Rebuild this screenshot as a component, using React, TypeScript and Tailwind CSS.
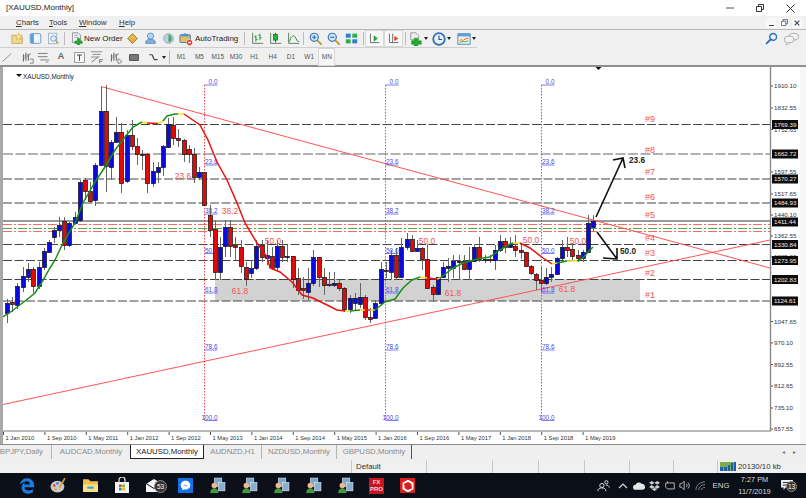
import { FaEdgeLegacy } from "react-icons/fa";

type Candle = [number, number, number, number, number, "b" | "r"];

const candles: Candle[] = [
  [7, 303, 313, 299, 323, "b"], [12, 302, 304, 297, 312, "r"], [17, 286, 305, 283, 309, "b"], [23, 276, 287, 267, 292, "b"],
  [28, 269, 277, 263, 282, "b"], [33, 269, 286, 267, 293, "r"], [39, 267, 286, 262, 289, "b"], [44, 251, 267, 248, 270, "b"],
  [49, 242, 252, 240, 253, "b"], [54, 230, 237, 227, 243, "b"], [59, 225, 230, 217, 237, "b"], [64, 221, 245, 217, 250, "r"],
  [69, 223, 245, 222, 247, "b"], [75, 217, 223, 212, 224, "b"], [80, 182, 220, 180, 222, "b"], [85, 180, 191, 178, 200, "r"],
  [90, 191, 201, 182, 203, "r"], [95, 165, 200, 163, 206, "b"], [101, 111, 165, 87, 165, "b"], [106, 111, 166, 85, 192, "r"],
  [111, 142, 167, 140, 180, "b"], [116, 132, 142, 117, 143, "b"], [121, 132, 183, 123, 193, "r"], [127, 135, 181, 130, 183, "b"],
  [132, 135, 146, 120, 150, "r"], [137, 146, 154, 138, 165, "r"], [142, 154, 155, 150, 170, "r"], [147, 154, 183, 153, 193, "r"],
  [153, 171, 183, 162, 187, "b"], [158, 167, 172, 162, 183, "b"], [163, 146, 167, 145, 176, "b"], [168, 124, 147, 118, 148, "b"],
  [173, 125, 138, 117, 145, "r"], [178, 138, 140, 129, 147, "r"], [184, 140, 154, 139, 162, "r"], [189, 149, 154, 145, 163, "r"],
  [194, 154, 177, 148, 183, "r"], [199, 172, 177, 167, 180, "b"], [204, 172, 205, 172, 206, "r"], [210, 215, 230, 205, 237, "r"],
  [215, 229, 272, 220, 280, "r"], [220, 247, 272, 237, 280, "b"], [225, 227, 246, 220, 257, "b"], [230, 227, 246, 220, 257, "r"],
  [235, 245, 247, 237, 260, "r"], [241, 247, 266, 240, 273, "r"], [246, 267, 279, 262, 286, "r"], [251, 268, 273, 260, 278, "b"],
  [256, 246, 268, 240, 270, "b"], [262, 245, 257, 240, 262, "r"], [267, 255, 258, 240, 265, "b"], [272, 256, 268, 247, 270, "r"],
  [277, 246, 267, 240, 270, "b"], [282, 246, 257, 240, 262, "r"], [287, 256, 257, 245, 262, "b"], [293, 256, 279, 256, 288, "r"],
  [298, 278, 290, 268, 295, "r"], [303, 288, 290, 277, 299, "r"], [308, 283, 292, 268, 300, "b"], [313, 257, 283, 250, 286, "b"],
  [319, 257, 277, 257, 287, "r"], [324, 277, 285, 268, 295, "r"], [329, 284, 285, 272, 287, "b"], [334, 283, 285, 272, 287, "b"],
  [339, 283, 288, 280, 291, "r"], [344, 288, 309, 287, 312, "r"], [350, 298, 309, 295, 313, "b"], [355, 298, 303, 293, 310, "b"],
  [360, 297, 304, 283, 308, "b"], [365, 297, 317, 295, 320, "r"], [370, 317, 319, 308, 323, "r"], [375, 303, 318, 300, 318, "b"],
  [381, 269, 303, 262, 305, "b"], [386, 270, 271, 262, 278, "r"], [391, 255, 272, 250, 279, "b"], [396, 255, 277, 248, 280, "r"],
  [401, 247, 277, 238, 278, "b"], [407, 239, 247, 233, 250, "b"], [412, 239, 251, 235, 252, "r"], [417, 248, 251, 240, 252, "b"],
  [422, 248, 259, 247, 270, "r"], [427, 259, 288, 244, 289, "r"], [433, 287, 294, 285, 302, "r"], [438, 277, 294, 277, 295, "b"],
  [443, 267, 277, 262, 278, "b"], [448, 266, 268, 258, 282, "b"], [453, 261, 268, 255, 278, "b"], [459, 261, 262, 255, 280, "b"],
  [464, 261, 269, 255, 270, "r"], [469, 261, 269, 247, 280, "b"], [474, 247, 261, 245, 262, "b"], [479, 247, 259, 237, 262, "r"],
  [485, 259, 260, 255, 263, "b"], [490, 259, 260, 255, 263, "r"], [495, 250, 260, 245, 270, "b"], [500, 241, 250, 235, 252, "b"],
  [505, 241, 247, 238, 253, "r"], [510, 244, 247, 237, 248, "b"], [515, 246, 250, 235, 257, "r"], [521, 250, 252, 243, 259, "r"],
  [526, 252, 266, 252, 267, "r"], [531, 266, 273, 265, 275, "r"], [536, 274, 280, 273, 290, "r"], [541, 280, 283, 267, 292, "r"],
  [546, 277, 283, 268, 285, "b"], [551, 274, 277, 267, 282, "b"], [557, 258, 274, 257, 275, "b"], [562, 247, 258, 240, 260, "b"],
  [567, 247, 250, 237, 257, "r"], [572, 249, 256, 243, 260, "r"], [578, 255, 258, 250, 262, "r"], [583, 252, 258, 250, 262, "b"],
  [588, 223, 252, 215, 253, "b"], [593, 221, 227, 215, 232, "b"],
];

const maSegments: { color: string; points: string }[] = [
  { color: "#1a8f1a", points: "3,317 12,311 25,301 35,293 42,282 50,268 55,260 63,243 75,223 83,203 95,182 105,167 115,150 125,137 133,127 142,122" },
  { color: "#f0e020", points: "142,122 147,123" },
  { color: "#e81010", points: "147,123 158,123.5" },
  { color: "#f0e020", points: "158,123.5 163,121" },
  { color: "#1a8f1a", points: "163,121 167,116 175,114 178,114" },
  { color: "#f0e020", points: "178,114 184,114" },
  { color: "#e81010", points: "184,114 200,125 208,140 217,162 227,180 237,203 245,223 257,243 267,257 270,268 280,272 292,282 302,295 313,298 323,303 337,310 345,311" },
  { color: "#f0e020", points: "345,311 350,311" },
  { color: "#1a8f1a", points: "350,311 360,310" },
  { color: "#f0e020", points: "360,310 365,310" },
  { color: "#e81010", points: "365,310 370,310" },
  { color: "#f0e020", points: "370,310 375,310" },
  { color: "#1a8f1a", points: "375,310 385,302 395,299 403,288 412,280 420,277" },
  { color: "#f0e020", points: "420,277 427,278" },
  { color: "#e81010", points: "427,278 437,279" },
  { color: "#f0e020", points: "437,279 440,278" },
  { color: "#1a8f1a", points: "440,278 453,268 463,263 477,259 490,257 500,250 510,244 513,243" },
  { color: "#f0e020", points: "513,243 520,243" },
  { color: "#e81010", points: "520,243 530,248 543,258 552,264" },
  { color: "#f0e020", points: "552,264 557,263" },
  { color: "#1a8f1a", points: "557,263 567,261" },
  { color: "#f0e020", points: "567,261 577,260.7" },
  { color: "#1a8f1a", points: "577,260.7 583,258 588,252 593,247" },
];

const priceLabels: [string, number][] = [
  ["1910.10", 86], ["1832.55", 108], ["1752.65", 129.5], ["1597.55", 172], ["1517.65", 194], ["1440.10", 215],
  ["1362.55", 236], ["1285.00", 257], ["1047.65", 321.5], ["970.10", 343], ["892.55", 364.5], ["812.65", 386], ["735.10", 408], ["657.55", 429],
];
const priceTags: [string, number][] = [
  ["1769.39", 124.5], ["1662.72", 154], ["1570.27", 179], ["1484.93", 203], ["1411.44", 222],
  ["1330.84", 244.5], ["1273.95", 260.5], ["1202.83", 279.5], ["1124.61", 301],
];
const levels = [124.5, 179, 203, 244.5, 260.5, 279.5, 301];
const fibLevels: [string, number][] = [["0.0", 85], ["23.6", 165], ["38.2", 214], ["50.0", 253.5], ["61.8", 293], ["78.6", 350], ["100.0", 420.5]];
const fibColumns = [204.5, 385.5, 541.5];
const fiboText: [string, number, number][] = [
  ["23.6", 183, 179], ["38.2", 230, 214], ["50.0", 273, 244], ["61.8", 240, 294], ["50.0", 427, 244],
  ["61.8", 453, 296], ["50.0", 531, 243], ["50.0", 578, 244], ["61.8", 567, 292],
];
const hashLabels: [string, number][] = [["#9", 122], ["#8", 153], ["#7", 175], ["#6", 200], ["#5", 218], ["#4", 241], ["#3", 256], ["#2", 276], ["#1", 298]];
const dates = ["1 Jan 2010", "1 Sep 2010", "1 May 2011", "1 Jan 2012", "1 Sep 2012", "1 May 2013", "1 Jan 2014", "1 Sep 2014", "1 May 2015", "1 Jan 2016", "1 Sep 2016", "1 May 2017", "1 Jan 2018", "1 Sep 2018", "1 May 2019"];
const timeframes = ["M1", "M5", "M15", "M30", "H1", "H4", "D1", "W1", "MN"];

function Caret() {
  return <span className="ml-[1px] h-0 w-0 border-x-[2.5px] border-t-[3px] border-x-transparent border-t-[#222]" />;
}

function Sep({ className }: { className: string }) {
  return <span className={`h-[13px] w-px shrink-0 bg-[#bcbcbc] ${className}`} />;
}

function Icon({ children, size = 13 }: { children: React.ReactNode; size?: number }) {
  return (
    <svg width={size} height={size} viewBox="0 0 16 16" className="shrink-0">
      {children}
    </svg>
  );
}

function Cell({ className = "w-[18px]", children }: { className?: string; children: React.ReactNode }) {
  return <div className={`flex h-full shrink-0 items-center justify-center ${className}`}>{children}</div>;
}

function ChartTypeIcon({ kind }: { kind: "bar" | "candle" | "line" }) {
  return (
    <Icon>
      <path d="M2 1v13h13" fill="none" stroke="#4a6a4a" strokeWidth="1" />
      {kind === "bar" && <path d="M6 4v8M4 6h2M6 9h2M11 2v8M9 4h2M11 7h2" stroke="#1f9a2f" strokeWidth="1.2" fill="none" />}
      {kind === "candle" && (
        <>
          <path d="M8 1v12" stroke="#333" strokeWidth="1" />
          <rect x="5.5" y="3" width="5" height="7" fill="#22b33a" stroke="#14601f" strokeWidth="0.8" />
        </>
      )}
      {kind === "line" && <path d="M3 12C5 5 8 3 10 6s2 6 5 6" fill="none" stroke="#1f9a2f" strokeWidth="1.2" />}
    </Icon>
  );
}

function ZoomIcon({ minus }: { minus?: boolean }) {
  return (
    <Icon size={13}>
      <path d="M10 10l5 5" stroke="#c89a30" strokeWidth="2.4" strokeLinecap="round" />
      <circle cx="6.5" cy="6.5" r="5" fill="#cfe6f7" stroke="#3b78b5" strokeWidth="1.4" />
      <path d={minus ? "M4 6.5h5" : "M4 6.5h5M6.5 4v5"} stroke="#2a6cab" strokeWidth="1.4" />
    </Icon>
  );
}

function ToolbarTop() {
  return (
    <div className="flex h-[17px] items-center pl-[8px] text-[8px] text-[#222]">
      <Cell>
        <Icon>
          <path d="M1 4h5l1 2h7v8H1z" fill="#efd98c" stroke="#b8954a" strokeWidth="0.8" />
          <path d="M9.500 1l1.400 3 3.100.3-2.300 2.100.7 3.100-2.900-1.600-2.700 1.600.6-3.100L5 4.300 8.100 4z" fill="#f9e88a" stroke="#c09a40" strokeWidth="0.6" />
        </Icon>
      </Cell>
      <Cell>
        <Icon>
          <rect x="1.500" y="2" width="13" height="12" rx="1.500" fill="#eef5fc" stroke="#4f8ac4" />
          <rect x="2" y="2.500" width="4" height="11" fill="#5a9ede" />
        </Icon>
      </Cell>
      <Cell>
        <Icon>
          <rect x="2" y="1.500" width="10" height="13" fill="#f3f7fb" stroke="#8fa9c4" />
          <circle cx="8" cy="8" r="3.400" fill="#e2f0fa" stroke="#5a8fc0" />
          <path d="M10.500 10.500l3.500 3.500" stroke="#c89a30" strokeWidth="1.600" />
        </Icon>
      </Cell>
      <Sep className="ml-[2px] mr-[3px]" />
      <div className="flex h-full w-[55px] shrink-0 items-center">
        <Cell className="w-[16px]">
          <Icon>
            <path d="M3 1h7l3 3v9H3z" fill="#f2f2f2" stroke="#777" strokeWidth="0.9" />
            <path d="M5 4h5M5 6.500h6" stroke="#7a8fa8" strokeWidth="0.8" />
            <path d="M9 8h3v3h3v3h-3v2H9v-2H6v-3h3z" fill="#19b02c" stroke="#0d7a1b" strokeWidth="0.5" />
          </Icon>
        </Cell>
        <span className="whitespace-nowrap">New Order</span>
      </div>
      <Cell>
        <Icon>
          <path d="M8 2l6 6-6 6-6-6z" fill="#e0b040" stroke="#8a6010" strokeWidth="0.9" />
          <path d="M5 8l3-3 3 3" stroke="#f7e090" strokeWidth="1" fill="none" />
        </Icon>
      </Cell>
      <Cell>
        <Icon>
          <circle cx="8" cy="5" r="3.800" fill="#b4d6f2" stroke="#4f88c0" />
          <path d="M2 14c0-4 2-5 6-5s6 1 6 5z" fill="#7fb0de" stroke="#4578ae" strokeWidth="0.8" />
        </Icon>
      </Cell>
      <Cell>
        <Icon>
          <circle cx="8" cy="8" r="6" fill="#b8d2e2" stroke="#8ea4b4" />
          <path d="M8 3c3 1 4 3 4 5s-1 4-3 5c-1-2-2-3-1-5s-1-3 0-5z" fill="#48a85a" />
        </Icon>
      </Cell>
      <Cell>
        <Icon size={14}>
          <rect x="1" y="3" width="12" height="9" rx="1" fill="#e2c060" stroke="#3b78b5" />
          <path d="M1 5l6-4 6 4" fill="#4f94d4" />
          <circle cx="12" cy="12" r="3.400" fill="#e11d1d" stroke="#fff" strokeWidth="0.7" />
          <rect x="10.500" y="11" width="3" height="2" fill="#fff" />
        </Icon>
      </Cell>
      <span className="w-[44px] shrink-0 whitespace-nowrap">AutoTrading</span>
      <Sep className="ml-[5px] mr-[3px]" />
      <Cell><ChartTypeIcon kind="bar" /></Cell>
      <Cell><ChartTypeIcon kind="candle" /></Cell>
      <Cell><ChartTypeIcon kind="line" /></Cell>
      <Sep className="ml-[1px] mr-[2px]" />
      <Cell><ZoomIcon /></Cell>
      <Cell><ZoomIcon minus /></Cell>
      <Cell>
        <Icon>
          <rect x="1" y="2" width="6" height="5" fill="#2f7fd0" />
          <rect x="9" y="2" width="6" height="5" fill="#2faa50" />
          <rect x="1" y="9" width="6" height="5" fill="#2faa50" />
          <rect x="9" y="9" width="6" height="5" fill="#2f7fd0" />
        </Icon>
      </Cell>
      <Sep className="ml-[3px] mr-[1px]" />
      <Cell className="w-[19px] border border-[#d8d8d8] bg-[#f7f7f7]">
        <Icon>
          <path d="M3 2v11h11" fill="none" stroke="#555" />
          <path d="M7 4l5 4-5 4z" fill="#1faa35" />
        </Icon>
      </Cell>
      <Cell className="w-[19px] border border-[#d8d8d8] bg-[#f7f7f7]">
        <Icon>
          <path d="M3 2v11h11M7 2v11" fill="none" stroke="#555" />
          <path d="M14 8l-5-3v6z" fill="#e0402a" />
        </Icon>
      </Cell>
      <Sep className="ml-[2px] mr-[1px]" />
      <div className="flex h-full w-[23px] shrink-0 items-center justify-center">
        <Icon size={14}>
          <path d="M2 1h6l3 3v5H2z" fill="#eee" stroke="#777" strokeWidth="0.8" />
          <path d="M6 7h4v3h4v4h-4v2H6v-2H3v-4h3z" fill="#19b02c" stroke="#0d7a1b" strokeWidth="0.5" />
        </Icon>
        <Caret />
      </div>
      <div className="flex h-full w-[23px] shrink-0 items-center justify-center">
        <Icon size={14}>
          <circle cx="8" cy="8" r="6.600" fill="#e8f2fb" stroke="#2b6fb8" strokeWidth="2" />
          <path d="M8 4v4.500h3.500" fill="none" stroke="#2b4f78" strokeWidth="1.200" />
        </Icon>
        <Caret />
      </div>
      <div className="flex h-full w-[27px] shrink-0 items-center justify-center">
        <Icon size={14}>
          <rect x="1" y="2" width="14" height="12" fill="#f5efe0" stroke="#3f86c8" />
          <rect x="1" y="2" width="14" height="3" fill="#5aa0dc" />
          <path d="M3 10c2-3 3 1 5-1s3-1 5-2" fill="none" stroke="#e0662a" strokeWidth="1.100" />
          <path d="M3 12c2-1 4-1 5-1s3 0 5-1" fill="none" stroke="#3aa050" strokeWidth="1" />
        </Icon>
        <Caret />
      </div>
      <div className="ml-auto flex h-full items-center gap-[6px] pr-[7px]">
        <Icon size={13}>
          <circle cx="10" cy="6" r="4.200" fill="none" stroke="#1f6fbd" strokeWidth="1.700" />
          <path d="M7 9l-5 5" stroke="#1f6fbd" strokeWidth="2.200" strokeLinecap="round" />
        </Icon>
        <Icon size={15}>
          <ellipse cx="10.500" cy="6" rx="5" ry="3.600" fill="#f3f3f3" stroke="#a5a5a5" />
          <ellipse cx="5.500" cy="9" rx="5" ry="3.600" fill="#f3f3f3" stroke="#a5a5a5" />
          <path d="M3 12l-1 3 4-2" fill="#f3f3f3" stroke="#a5a5a5" strokeWidth="0.8" />
        </Icon>
      </div>
    </div>
  );
}

function ToolbarBottom() {
  return (
    <div className="flex h-[18px] items-center text-[6.5px] text-[#555]">
      <Cell className="w-[14px]">
        <Icon size={12}><path d="M2 14L14 3" stroke="#777" strokeWidth="1" /></Icon>
      </Cell>
      <Cell className="ml-[4px] w-[18px]">
        <Icon size={13}>
          <path d="M3 4v9M6 2v10M9 4v8" stroke="#444" strokeWidth="1" />
          <path d="M2 10l10-6M2 7l10-4" stroke="#777" strokeWidth="0.7" />
          <path d="M11 10h4v5h-4" fill="none" stroke="#555" strokeWidth="0.8" />
        </Icon>
      </Cell>
      <Cell className="w-[14px]">
        <Icon size={13}>
          <path d="M1 3h12M1 7h12M4 11h7" stroke="#666" strokeWidth="1" />
          <path d="M11 11h4M11 13.500h3" stroke="#555" strokeWidth="0.8" />
        </Icon>
      </Cell>
      <Cell className="w-[22px]">
        <span className="text-[9px] font-bold text-[#666]">A</span>
      </Cell>
      <Cell className="w-[14px]">
        <Icon size={13}>
          <rect x="2" y="2" width="12" height="12" fill="#f7f7f7" stroke="#888" />
          <path d="M5 5h6M8 5v7" stroke="#444" strokeWidth="1.200" />
        </Icon>
      </Cell>
      <Cell className="w-[22px]">
        <Icon size={14}>
          <path d="M1 2h13M3 5h9M1 8h10" stroke="#777" strokeWidth="0.9" />
          <path d="M2 14l7-6" stroke="#555" strokeWidth="0.9" />
          <path d="M11 11h4M11 11v4M11 13h3" stroke="#555" strokeWidth="0.8" fill="none" />
        </Icon>
      </Cell>
      <Cell className="w-[14px]">
        <Icon size={13}>
          <path d="M3 4v9M6 2v10M9 4v8" stroke="#444" strokeWidth="1" />
          <path d="M2 10l10-6M2 7l10-4" stroke="#777" strokeWidth="0.7" />
          <path d="M11 10h2l2 2v2l-2 1h-2z" fill="none" stroke="#555" strokeWidth="0.8" />
        </Icon>
      </Cell>
      <Cell className="w-[24px]">
        <span className="h-[7px] w-[10px] rounded-[1px] border border-[#555] bg-[#777]" />
      </Cell>
      <Cell className="w-[14px]">
        <Icon size={11}>
          <path d="M2 4h4M9 11h5M6 4l3 7" stroke="#444" strokeWidth="1.800" fill="none" />
        </Icon>
      </Cell>
      <Cell className="w-[6px]">
        <Caret />
      </Cell>
      <Sep className="ml-[3px] mr-[2px]" />
      {timeframes.map((tf) => (
        <Cell
          key={tf}
          className={
            tf === "MN"
              ? "my-[1px] h-[16px] w-[17px] border border-[#d8d8d8] bg-[#f7f7f7]"
              : "w-[18.3px]"
          }
        >
          {tf}
        </Cell>
      ))}
    </div>
  );
}

function ChartSvg() {
  return (
    <svg width={797} height={377} viewBox="3 67 797 377" className="block shrink-0 bg-white">
      <path d="M595.500 67l3 3 3-3z" fill="#111" />

      {/* support zone */}
      <rect x="215" y="279" width="425" height="22" fill="#d2d2d2" />

      {/* horizontal levels */}
      {levels.map((y) => (
        <line key={y} x1="3" x2="770" y1={y} y2={y} stroke="#444" strokeWidth="1" strokeDasharray="9 2.500" />
      ))}
      <line x1="3" x2="770" y1="154" y2="154" stroke="#999" strokeWidth="1.600" strokeDasharray="10 2.500" />
      <line x1="3" x2="770" y1="221" y2="221" stroke="#777" strokeWidth="1.400" />
      <line x1="3" x2="770" y1="224.500" y2="224.500" stroke="#f55" strokeWidth="0.9" strokeDasharray="9 2 2 2" />
      <line x1="3" x2="770" y1="228.500" y2="228.500" stroke="#2fa52f" strokeWidth="0.9" strokeDasharray="9 2 2 2" />
      <line x1="3" x2="770" y1="231.500" y2="231.500" stroke="#f55" strokeWidth="0.9" strokeDasharray="9 2 2 2" />

      {/* trend lines */}
      <line x1="101" y1="86.500" x2="770" y2="268" stroke="#f55" strokeWidth="1" />
      <line x1="3" y1="404.500" x2="770" y2="240" stroke="#f55" strokeWidth="1" />

      {/* fibo columns */}
      {fibColumns.map((x) => (
        <g key={x}>
          <line x1={x} x2={x} y1="85" y2="421" stroke="#ee3333" strokeWidth="0.9" strokeDasharray="1.500 1.500" />
          {fibLevels.map(([label, y]) => (
            <g key={label}>
              <line x1={x} x2={x + 13} y1={y} y2={y} stroke="#5a5af0" strokeWidth="0.8" />
              <text x={x + 13} y={y - 1} textAnchor="end" fontSize="6.400" fill="#4a4ae8">{label}</text>
            </g>
          ))}
        </g>
      ))}

      {/* candles */}
      {candles.map(([x, top, bottom, high, low, dir]) => (
        <g key={x}>
          <line x1={x + 0.5} x2={x + 0.5} y1={high} y2={low} stroke="#666" strokeWidth="1" />
          <rect
            x={x - 1.5}
            y={top + 0.5}
            width="4"
            height={Math.max(bottom - top, 1)}
            fill={dir === "b" ? "#0a0ae0" : "#e00a0a"}
            stroke="#111"
            strokeWidth="0.7"
          />
        </g>
      ))}

      {/* moving average */}
      {maSegments.map((seg) => (
        <polyline key={seg.points} points={seg.points} fill="none" stroke={seg.color} strokeWidth="1.500" />
      ))}

      {/* text labels */}
      {fiboText.map(([label, x, y]) => (
        <text key={`${label}${x}`} x={x} y={y} textAnchor="middle" fontSize="8.400" fill="#f25555">{label}</text>
      ))}
      {hashLabels.map(([label, y]) => (
        <text key={label} x="650" y={y} textAnchor="middle" fontSize="9" fill="#f25555">{label}</text>
      ))}
      <text x="637" y="163" textAnchor="middle" fontSize="8.200" fontWeight="700" fill="#222">23.6</text>
      <text x="628" y="254" textAnchor="middle" fontSize="8.200" fontWeight="700" fill="#222">50.0</text>

      {/* arrows */}
      <path d="M596 217L623 158M613 160l10-2 2 10" fill="none" stroke="#111" strokeWidth="1.600" />
      <path d="M597 232L617 259M603 258l14 1 0-11" fill="none" stroke="#111" strokeWidth="1.600" />

      {/* chart title */}
      <path d="M16 74h6l-3 3z" fill="#111" />
      <text x="23" y="78.500" fontSize="6.400" fill="#222">XAUUSD,Monthly</text>

      {/* plot frame */}
      <line x1="770.500" x2="770.500" y1="67" y2="431" stroke="#8a8a8a" strokeWidth="1.400" />
      <line x1="3" x2="771" y1="431" y2="431" stroke="#777" strokeWidth="1.200" />

      {/* price scale */}
      {priceLabels.map(([label, y]) => (
        <g key={label}>
          <line x1="771" x2="773" y1={y} y2={y} stroke="#555" />
          <text x="774" y={y + 2.3} fontSize="6.200" fill="#333">{label}</text>
        </g>
      ))}
      {priceTags.map(([label, y]) => (
        <g key={label}>
          <rect x="772" y={y - 4.5} width="26" height="9" fill="#0c0c0c" />
          <text x="774" y={y + 2.3} fontSize="6.200" fill="#eee">{label}</text>
        </g>
      ))}

      {/* time scale */}
      {dates.map((d, i) => (
        <g key={d}>
          <line x1={3.5 + i * 41.4} x2={3.5 + i * 41.4} y1="432" y2="435" stroke="#555" />
          <text x={5.5 + i * 41.4} y="439.500" fontSize="5.800" fill="#333">{d}</text>
        </g>
      ))}
    </svg>
  );
}

function Tabs() {
  const tab = "flex h-full shrink-0 items-center justify-center text-[#8a8a8a]";
  return (
    <div className="flex h-[16px] items-start border-t border-[#8a8a8a] bg-[#efefef] text-[7.8px]">
      <div className="flex h-[14px] w-full items-center">
        <div className={`${tab} w-[52px] justify-end overflow-hidden whitespace-nowrap border-r border-[#b5b5b5] pr-[8px]`}>GBPJPY,Daily</div>
        <div className={`${tab} w-[78px]`}>AUDCAD,Monthly</div>
        <div className={`${tab} w-[74px] border-x border-b border-[#222] bg-white text-[#222]`}>XAUUSD,Monthly</div>
        <div className={`${tab} w-[58px] border-r border-[#b5b5b5]`}>AUDNZD,H1</div>
        <div className={`${tab} w-[75px] border-r border-[#b5b5b5]`}>NZDUSD,Monthly</div>
        <div className={`${tab} w-[75px] border-r border-[#555]`}>GBPUSD,Monthly</div>
        <div className="ml-auto flex items-center gap-[8px] pr-[10px] text-[6px] text-[#777]">
          <span>◂</span>
          <span>▸</span>
        </div>
      </div>
    </div>
  );
}

function StatusBar() {
  const seg = "h-full shrink-0 border-l border-[#c8c8c8]";
  return (
    <div className="flex h-[13px] items-center bg-[#f0f0f0] text-[7.8px] text-[#333]">
      <div className="h-full w-[351px] shrink-0" />
      <div className={`${seg} w-[75px] pl-[4px] leading-[13px]`}>Default</div>
      <div className={`${seg} w-[66px]`} />
      <div className={`${seg} w-[46px]`} />
      <div className={`${seg} w-[46px]`} />
      <div className={`${seg} w-[45px]`} />
      <div className={`${seg} w-[44px]`} />
      <div className={`${seg} w-[44px]`} />
      <div className={`${seg} flex flex-1 items-center gap-[2px] pl-[2px]`}>
        <svg width="16" height="9" viewBox="0 0 16 9">
          <rect x="0" y="0" width="16" height="9" fill="#7cae4a" />
          <path d="M0 9V5h3v4h1V5h3v4h1V3h2v6h1V1h2v8h1V0h2v9z" fill="#1f5fa8" />
        </svg>
        <span className="whitespace-nowrap">20130/10 kb</span>
      </div>
    </div>
  );
}

function Mt4Icon() {
  return (
    <svg width="17" height="17" viewBox="0 0 16 16">
      <rect x="5" y="1" width="7" height="8" fill="#7fa6c8" stroke="#cfe0f0" strokeWidth="0.6" />
      <rect x="9" y="5" width="6" height="8" fill="#8ab0d0" stroke="#dbe8f4" strokeWidth="0.6" />
      <circle cx="5" cy="8" r="2.600" fill="#e8b890" />
      <path d="M1 15c0-3 2-4.500 4-4.500S9 12 9 15z" fill="#3f9a3f" />
    </svg>
  );
}

function Taskbar() {
  const mt4 = [0, 1, 2, 3, 4];
  return (
    <div className="flex h-[25px] items-center bg-[#0b0f17] pl-[11px] text-white">
      <Cell className="w-[32px]">
        <FaEdgeLegacy className="text-[16px] text-[#1d7bdc]" />
      </Cell>
      <Cell className="w-[31px]">
        <svg width="17" height="17" viewBox="0 0 16 16">
          <ellipse cx="7" cy="9" rx="6.500" ry="5.500" fill="#c9c9c9" />
          <circle cx="4" cy="8" r="1.200" fill="#e33" />
          <circle cx="7" cy="6" r="1.200" fill="#3a7de0" />
          <circle cx="5" cy="11.500" r="1.200" fill="#e8b020" />
          <path d="M9 10L14 1" stroke="#d89a30" strokeWidth="1.600" />
        </svg>
      </Cell>
      <Cell className="w-[32px]">
        <svg width="17" height="15" viewBox="0 0 16 14">
          <path d="M1 1h5l2 2h7v10H1z" fill="#f2c14e" />
          <rect x="1" y="6" width="14" height="7" fill="#ffe08a" />
          <rect x="5" y="8" width="6" height="2" fill="#3aa0e0" />
        </svg>
      </Cell>
      <Cell className="w-[32px]">
        <svg width="16" height="17" viewBox="0 0 16 17">
          <path d="M5 5V3a3 3 0 016 0v2" fill="none" stroke="#eee" strokeWidth="1.200" />
          <rect x="1" y="5" width="14" height="11" fill="#f5f5f5" />
          <rect x="5" y="7.500" width="2.700" height="2.700" fill="#e5492c" />
          <rect x="8.300" y="7.500" width="2.700" height="2.700" fill="#7db51e" />
          <rect x="5" y="10.800" width="2.700" height="2.700" fill="#1c9ae0" />
          <rect x="8.300" y="10.800" width="2.700" height="2.700" fill="#f5ba12" />
        </svg>
      </Cell>
      <Cell className="relative w-[32px]">
        <svg width="16" height="13" viewBox="0 0 16 13">
          <path d="M0 5l8-5 8 5v8H0z" fill="#f4f4f4" />
          <path d="M0 4.500l8 5 8-5" fill="none" stroke="#0b0f17" strokeWidth="1" />
        </svg>
        <span className="absolute left-[16px] top-[7px] flex h-[13px] w-[13px] items-center justify-center rounded-full border border-[#888] bg-[#333] text-[6.5px]">53</span>
      </Cell>
      <Cell className="w-[31px]">
        <span className="flex h-[15px] w-[15px] items-center justify-center bg-[#1670e6]">
          <svg width="11" height="11" viewBox="0 0 16 16">
            <path d="M8 1C4 1 1 4 1 7.500c0 2 1 3.700 2.500 4.800V15l2.500-1.400c.6.2 1.300.3 2 .3 4 0 7-3 7-6.400S12 1 8 1z" fill="#fff" />
            <path d="M4 9.500l3-3 2 2 3-2-3 3-2-2z" fill="#1670e6" />
          </svg>
        </span>
      </Cell>
      {mt4.map((i) => (
        <Cell key={i} className="w-[32px]">
          <Mt4Icon />
        </Cell>
      ))}
      <Cell className="w-[31px]">
        <span className="flex h-[16px] w-[15px] flex-col items-center justify-center bg-[#c8141e] text-[6px] font-bold leading-[7px] text-[#f4d0d0]">
          <span>FX</span>
          <span>PRO</span>
        </span>
      </Cell>
      <Cell className="w-[31px]">
        <span className="flex h-[15px] w-[15px] items-center justify-center bg-[#d81e1e]">
          <svg width="12" height="12" viewBox="0 0 16 16">
            <path d="M8 1l6 3.500v7L8 15l-6-3.500v-7z" fill="none" stroke="#fff" strokeWidth="2.600" />
            <path d="M3 5l10 6" stroke="#d81e1e" strokeWidth="2" />
          </svg>
        </span>
      </Cell>
      <div className="ml-auto flex h-full items-center pr-[7px] text-[#d8d8d8]">
        <Cell className="w-[24px]">
          <svg width="13" height="13" viewBox="0 0 16 16" fill="none" stroke="#ddd" strokeWidth="1.200">
            <circle cx="6" cy="8" r="2.600" />
            <path d="M1 15c0-3 2-4 5-4s5 1 5 4" />
            <circle cx="11.500" cy="4" r="2" />
            <path d="M11 7.500c2 0 4 1 4 3" />
          </svg>
        </Cell>
        <Cell className="w-[16px]">
          <svg width="10" height="7" viewBox="0 0 10 7" fill="none" stroke="#ddd" strokeWidth="1.100">
            <path d="M1 6l4-4 4 4" />
          </svg>
        </Cell>
        <Cell className="w-[16px]">
          <svg width="12" height="8" viewBox="0 0 14 9"><path d="M3 9a3 3 0 010-6 4 4 0 017-1 3.500 3.500 0 011 7z" fill="#e6e6e6" /></svg>
        </Cell>
        <Cell className="w-[15px]">
          <svg width="11" height="10" viewBox="0 0 12 11"><path d="M3 0l3 2-3 2-3-2zM9 0l3 2-3 2-3-2zM3 4.500l3 2 3-2 3 2-3 2-3-1.700L3 8.500l-3-2zM3 9l3-1.500L9 9l-3 2z" fill="#ccc" /></svg>
        </Cell>
        <Cell className="w-[15px]">
          <svg width="12" height="9" viewBox="0 0 14 10" fill="none" stroke="#ccc" strokeWidth="1"><path d="M2 2h10v7H4L2 7zM4 0v2" /></svg>
        </Cell>
        <Cell className="w-[16px]">
          <svg width="12" height="11" viewBox="0 0 14 12" fill="none" stroke="#ccc" strokeWidth="1"><path d="M1 4h2l3-3v10L3 8H1zM8.500 4c1 1 1 3 0 4M10.500 2.500c2 2 2 5 0 7" /></svg>
        </Cell>
        <Cell className="w-[15px]">
          <svg width="11" height="10" viewBox="0 0 12 11" fill="none" stroke="#999" strokeWidth="0.9"><path d="M1 10c0-5 4-9 10-9M4 10c0-3 3-6 7-6M7 10c0-2 2-3 4-3" /></svg>
        </Cell>
        <span className="w-[26px] text-center text-[7.8px]">ENG</span>
        <div className="w-[41px] text-center text-[7.4px] leading-[12px]">
          <div>7:27 PM</div>
          <div>11/7/2019</div>
        </div>
        <Cell className="relative w-[24px]">
          <svg width="12" height="11" viewBox="0 0 14 13"><path d="M0 0h14v9H5l-2 3V9H0z" fill="#f0f0f0" /><path d="M2 3h10M2 6h10" stroke="#0b0f17" strokeWidth="1" /></svg>
          <span className="absolute left-[11px] top-[8px] flex h-[11px] w-[11px] items-center justify-center rounded-full border border-[#888] bg-[#333] text-[6.5px] text-white">13</span>
        </Cell>
      </div>
    </div>
  );
}

export default function App() {
  return (
    <div className="flex h-[498px] w-[806px] flex-col overflow-hidden bg-[#f0f0f0] font-['Liberation_Sans',sans-serif]">
      {/* title bar */}
      <div className="flex h-[16px] items-center justify-between bg-white pl-[6px] text-[8px] text-[#222]">
        <span>[XAUUSD,Monthly]</span>
        <div className="flex items-center text-[#333]">
          <Cell className="w-[30px]">
            <svg width="8" height="2" viewBox="0 0 8 2"><path d="M0 1h8" stroke="#555" /></svg>
          </Cell>
          <Cell className="w-[29px]">
            <svg width="8" height="8" viewBox="0 0 8 8" fill="none" stroke="#333"><path d="M.5 2.500h5v5h-5zM2.500 2.500v-2h5v5h-2" /></svg>
          </Cell>
          <Cell className="w-[32px]">
            <svg width="9" height="9" viewBox="0 0 9 9" stroke="#333"><path d="M.5.500l8 8M8.500.500l-8 8" /></svg>
          </Cell>
        </div>
      </div>

      {/* menu bar */}
      <div className="flex h-[14px] items-center justify-between border-b border-[#b8b8b8] pl-[16px] text-[7.8px] text-[#333]">
        <div className="flex">
          <span className="w-[33px]"><span className="underline">C</span>harts</span>
          <span className="w-[30px]"><span className="underline">T</span>ools</span>
          <span className="w-[40px]"><span className="underline">W</span>indow</span>
          <span><span className="underline">H</span>elp</span>
        </div>
        <div className="flex items-center gap-[3px] pr-[4px]">
          <span className="flex h-[10px] w-[10px] items-end justify-center bg-[#f8f8f8] pb-[2px]"><span className="h-px w-[5px] bg-[#345]" /></span>
          <span className="flex h-[10px] w-[10px] items-center justify-center bg-[#f8f8f8]">
            <svg width="7" height="7" viewBox="0 0 8 8" fill="none" stroke="#567"><path d="M.5 2.500h5v5h-5zM2.500 2.500v-2h5v5h-2" /></svg>
          </span>
          <span className="flex h-[10px] w-[10px] items-center justify-center bg-[#f8f8f8]">
            <svg width="6" height="6" viewBox="0 0 9 9" stroke="#345" strokeWidth="1.600"><path d="M1 1l7 7M8 1l-7 7" /></svg>
          </span>
        </div>
      </div>

      {/* toolbars */}
      <div className="h-[37px] border-b-2 border-[#8f8f8f]">
        <ToolbarTop />
        <div className="h-px w-[477px] bg-[#cfcfcf]" />
        <ToolbarBottom />
      </div>

      {/* chart */}
      <div className="flex h-[377px]">
        <div className="w-[3px] shrink-0 bg-[#a8a8a8]" />
        <ChartSvg />
        <div className="flex-1 bg-[#f6f6f6]" />
      </div>

      <Tabs />
      <StatusBar />
      <Taskbar />
    </div>
  );
}
